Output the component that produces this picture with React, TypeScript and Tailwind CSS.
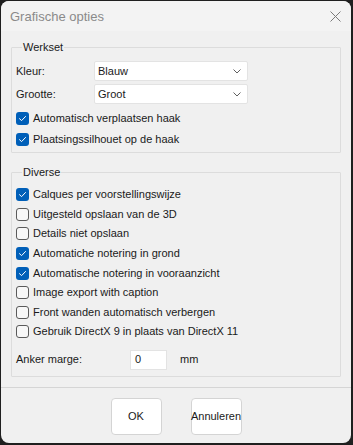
import React from "react";

const font = { fontFamily: '"Liberation Sans", Arial, sans-serif' };

function Check({ checked }: { checked: boolean }) {
  return checked ? (
    <span className="flex h-[13px] w-[13px] shrink-0 items-center justify-center rounded-[3px] bg-[#005fb8]">
      <svg width="9" height="9" viewBox="0 0 9 9" fill="none">
        <path d="M1.5 4.7 L3.6 6.6 L7.5 2.5" stroke="white" strokeWidth="1" strokeLinecap="round" strokeLinejoin="round" />
      </svg>
    </span>
  ) : (
    <span className="h-[13px] w-[13px] shrink-0 rounded-[3px] border border-[#5a5a5a] bg-[#f7f7f7]" />
  );
}

function CheckRow({ checked, label, h }: { checked: boolean; label: string; h: string }) {
  return (
    <div className={`flex items-center gap-[4px] ${h}`}>
      <Check checked={checked} />
      <span className="text-[11px] leading-none text-[#1a1a1a]">{label}</span>
    </div>
  );
}

function Select({ value }: { value: string }) {
  return (
    <div className="flex h-[20px] w-[154px] items-center justify-between rounded-[2px] border border-[#e3e3e3] bg-white pl-[3px] pr-[6px]">
      <span className="text-[11px] leading-none text-[#1a1a1a]">{value}</span>
      <svg width="8" height="5" viewBox="0 0 8 5" fill="none">
        <path d="M0.5 0.5 L4 4 L7.5 0.5" stroke="#606060" strokeWidth="1" />
      </svg>
    </div>
  );
}

export default function App() {
  return (
    <div className="h-[445px] w-[353px] bg-[#1f1f1f] pb-[2px] pl-px pr-[2px] pt-px" style={font}>
      <div className="flex h-full w-full flex-col overflow-hidden rounded-[8px] bg-[#f0f0f0]">
        {/* Title bar */}
        <div className="flex h-[30px] shrink-0 items-center justify-between bg-[#f3f3f3] pl-[9px] pr-[10px]">
          <span className="text-[13px] leading-none text-[#8a8a8a]">Grafische opties</span>
          <svg width="11" height="11" viewBox="0 0 11 11" fill="none">
            <path d="M0.5 0.5 L10.5 10.5 M10.5 0.5 L0.5 10.5" stroke="#7a7a7a" strokeWidth="1" />
          </svg>
        </div>

        <div className="flex flex-col px-[10px] pt-[8px]">
          {/* Werkset */}
          <fieldset className="rounded-[1px] border border-[#dcdcdc] px-[4px] pb-[2px]">
            <legend className="ml-[6px] px-px text-[11px] leading-[16px] text-[#1a1a1a]">Werkset</legend>
            <div className="mt-[6px] flex flex-col gap-[3px]">
              <div className="flex items-center">
                <span className="w-[78px] text-[11px] leading-none text-[#1a1a1a]">Kleur:</span>
                <Select value="Blauw" />
              </div>
              <div className="flex items-center">
                <span className="w-[78px] text-[11px] leading-none text-[#1a1a1a]">Grootte:</span>
                <Select value="Groot" />
              </div>
            </div>
            <div className="mt-[4px] flex flex-col">
              <CheckRow checked label="Automatisch verplaatsen haak" h="h-[21px]" />
              <CheckRow checked label="Plaatsingssilhouet op de haak" h="h-[21px]" />
            </div>
          </fieldset>

          {/* Diverse */}
          <fieldset className="mt-[11px] rounded-[1px] border border-[#dcdcdc] px-[4px] pb-[6px]">
            <legend className="ml-[6px] px-px text-[11px] leading-[16px] text-[#1a1a1a]">Diverse</legend>
            <div className="mt-[5px] flex flex-col">
              <CheckRow checked label="Calques per voorstellingswijze" h="h-[19.6px]" />
              <CheckRow checked={false} label="Uitgesteld opslaan van de 3D" h="h-[19.6px]" />
              <CheckRow checked={false} label="Details niet opslaan" h="h-[19.6px]" />
              <CheckRow checked label="Automatiche notering in grond" h="h-[19.6px]" />
              <CheckRow checked label="Automatische notering in vooraanzicht" h="h-[19.6px]" />
              <CheckRow checked={false} label="Image export with caption" h="h-[19.6px]" />
              <CheckRow checked={false} label="Front wanden automatisch verbergen" h="h-[19.6px]" />
              <CheckRow checked={false} label="Gebruik DirectX 9 in plaats van DirectX 11" h="h-[19.6px]" />
            </div>
            <div className="mt-[8px] flex items-center">
              <span className="w-[114px] text-[11px] leading-none text-[#1a1a1a]">Anker marge:</span>
              <div className="flex h-[20px] w-[37px] items-center border border-[#e3e3e3] bg-white pl-[4px]">
                <span className="text-[11px] leading-none text-[#1a1a1a]">0</span>
              </div>
              <span className="ml-[13px] text-[11px] leading-none text-[#1a1a1a]">mm</span>
            </div>
          </fieldset>
        </div>

        <div className="mt-[10px] h-px w-full bg-[#d5d5d5]" />

        <div className="flex justify-center gap-[29px] pt-[10px]">
          <button className="flex h-[37px] w-[51px] items-center justify-center rounded-[4px] border border-[#d4d4d4] bg-white text-[11px] text-[#1a1a1a]">
            OK
          </button>
          <button className="flex h-[37px] w-[51px] items-center justify-center rounded-[4px] border border-[#d4d4d4] bg-white text-[11px] text-[#1a1a1a]">
            Annuleren
          </button>
        </div>
      </div>
    </div>
  );
}
